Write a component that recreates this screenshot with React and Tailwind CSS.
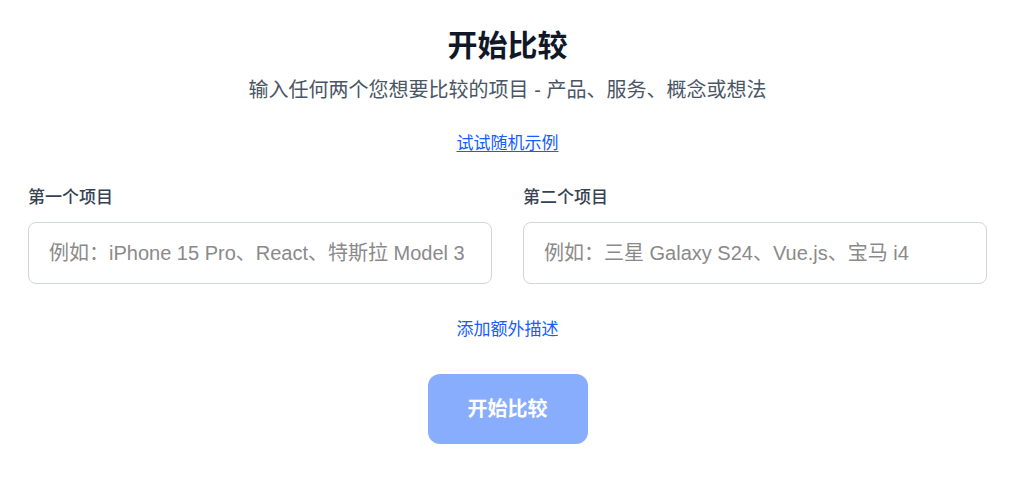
import { useState } from 'react';

const App = () => {
  const [itemA, setItemA] = useState('');
  const [itemB, setItemB] = useState('');

  return (
    <div
      className="min-h-screen bg-white pt-7 pl-7 pr-8"
      style={{ fontFamily: '"Liberation Sans", "Noto Sans CJK SC", sans-serif' }}
    >
      {/* header */}
      <div className="text-center">
        <h1 className="text-3xl font-bold text-gray-900">开始比较</h1>
        <p className="mt-3 text-xl text-gray-600">
          输入任何两个您想要比较的项目 - 产品、服务、概念或想法
        </p>
        <button className="mt-[28px] text-[17px] leading-6 text-blue-600 underline underline-offset-2">
          试试随机示例
        </button>
      </div>

      {/* inputs */}
      <div className="mt-[32px] grid grid-cols-2 gap-[31px]">
        <div>
          <label className="block mb-[14px] text-[17px] leading-5 font-medium text-gray-700">第一个项目</label>
          <input
            type="text"
            value={itemA}
            onChange={(e) => setItemA(e.target.value)}
            placeholder="例如：iPhone 15 Pro、React、特斯拉 Model 3"
            className="w-full h-[62px] px-5 rounded-lg border border-gray-300 text-xl text-gray-900 placeholder:text-[#8a8a8a] focus:outline-none"
          />
        </div>
        <div>
          <label className="block mb-[14px] text-[17px] leading-5 font-medium text-gray-700">第二个项目</label>
          <input
            type="text"
            value={itemB}
            onChange={(e) => setItemB(e.target.value)}
            placeholder="例如：三星 Galaxy S24、Vue.js、宝马 i4"
            className="w-full h-[62px] px-5 rounded-lg border border-gray-300 text-xl text-gray-900 placeholder:text-[#8a8a8a] focus:outline-none"
          />
        </div>
      </div>

      <div className="mt-[34px] flex flex-col items-center">
        <button className="text-[17px] leading-6 text-blue-600">添加额外描述</button>
        <button
          disabled={!itemA || !itemB}
          className="mt-[32px] w-[160px] h-[70px] rounded-xl bg-blue-600 text-xl font-bold text-white disabled:opacity-50"
        >
          开始比较
        </button>
      </div>
    </div>
  );
};

export default App;
